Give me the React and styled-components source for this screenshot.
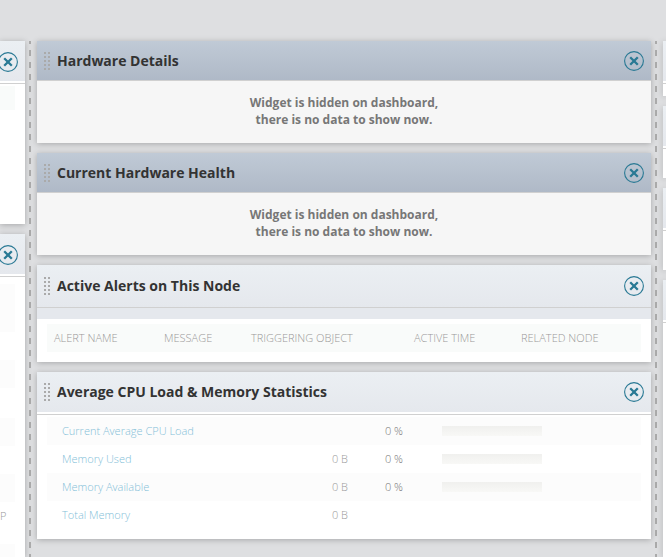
import React from "react";
import styled, { createGlobalStyle } from "styled-components";

const GlobalStyle = createGlobalStyle`
  * {
    box-sizing: border-box;
  }

  body {
    margin: 0;
    background: #dedfe1;
    font-family: "Open Sans", "Liberation Sans", sans-serif;
    font-size: 11px;
    color: #333;
  }
`;

const Dashboard = styled.main`
  display: grid;
  grid-template-columns: 25px 12px minmax(0, 1fr) 12px 3px;
  min-height: 100vh;
  padding-top: 41px;
`;

const Column = styled.div`
  display: flex;
  flex-direction: column;
  gap: 10px;
  min-width: 0;
`;

const Divider = styled.div`
  width: 2px;
  margin-left: 4px;
  background: repeating-linear-gradient(
    #aaa 0 3px,
    transparent 3px 9px,
    #aaa 9px 12px
  );
`;

const Panel = styled.section`
  display: flex;
  flex-direction: column;
  flex: ${({ $grow }) => ($grow ? "1" : "none")};
  height: ${({ $height }) => ($height ? `${$height}px` : "auto")};
  background: ${({ $muted }) => ($muted ? "#f6f6f6" : "#fff")};
  box-shadow: 0 1px 6px rgba(0, 0, 0, 0.25);
`;

const PanelHeader = styled.header`
  display: flex;
  align-items: center;
  flex: none;
  height: ${({ $height }) => $height || 40}px;
  padding: 0 7px;
  background: ${({ $muted }) =>
    $muted
      ? "linear-gradient(#c0cad6, #afb9c7)"
      : "linear-gradient(#ebeff3, #e5e8ed)"};
  border-bottom: ${({ $muted }) => ($muted ? "1px solid #d0d0d0" : "none")};
`;

const Title = styled.h2`
  flex: 1;
  margin: 0 0 0 7px;
  font-size: 14px;
  line-height: 20px;
  font-weight: 700;
  color: #333;
  white-space: nowrap;
`;

const CloseButton = styled.button`
  display: flex;
  flex: none;
  width: 20px;
  height: 20px;
  margin-left: auto;
  padding: 0;
  border: 0;
  background: none;
  cursor: pointer;
`;

const GripIcon = styled.svg`
  flex: none;
  fill: #aaa;
`;

const Rule = styled.div`
  flex: none;
  height: 1px;
  margin-top: ${({ $gap }) => $gap || 0}px;
  background: #d0d0d0;
`;

const Band = styled.div`
  height: 11px;
  background: #e5e8ed;
`;

const HiddenMessage = styled.p`
  margin: 0;
  padding: 13px 0 15px;
  font-size: 12px;
  line-height: 17px;
  font-weight: 700;
  color: #777;
  text-align: center;
`;

const Body = styled.div`
  padding: ${({ $top }) => $top}px 10px 10px;
`;

const Table = styled.table`
  width: 100%;
  border-collapse: collapse;
  table-layout: fixed;
  font-size: 11px;
  line-height: 16px;
`;

const HeadCell = styled.th`
  width: ${({ $width }) => ($width ? `${$width}px` : "auto")};
  height: 28px;
  padding: 0 7px;
  background: #f9fbfa;
  color: #999;
  font-weight: 300;
  text-align: left;
  white-space: nowrap;
`;

const StatRow = styled.tr`
  &:nth-child(odd) {
    background: #fcfcfc;
  }
`;

const StatCell = styled.td`
  width: ${({ $width }) => ($width ? `${$width}px` : "auto")};
  height: 28px;
  padding: 0;
  color: ${({ $dark }) => ($dark ? "#777" : "#999")};
  font-weight: 300;
  text-align: right;
`;

const StatName = styled.th`
  width: 220px;
  height: 28px;
  padding: 0 0 0 15px;
  font-weight: 300;
  text-align: left;
`;

const StatLink = styled.a`
  color: #84c0d8;
  text-decoration: none;
`;

const Bar = styled.div`
  width: 100px;
  height: 10px;
  margin-left: 39px;
  background: linear-gradient(#f0f0ee, #f8f8f6);
`;

const Stripe = styled.div`
  flex: ${({ $grow }) => ($grow ? "1" : "none")};
  height: ${({ $height }) => $height}px;
  margin: ${({ $top }) => $top}px 10px 0 0;
  background: ${({ $head }) => ($head ? "#f9fbfa" : "#fcfcfc")};
`;

const ClippedCell = styled.div`
  height: 28px;
  padding-right: 20px;
  line-height: 28px;
  color: #999;
  font-weight: 300;
  text-align: right;
`;

const SidePanelHeader = styled(PanelHeader)`
  overflow: hidden;
  padding: 2px 7px 0 0;
  justify-content: flex-end;
`;

const Grip = () => (
  <GripIcon width="6" height="18" viewBox="0 0 6 18" aria-hidden="true">
    {[0, 4, 8, 12, 16].map((y) => (
      <React.Fragment key={y}>
        <rect x="0" y={y} width="2" height="2" />
        <rect x="4" y={y} width="2" height="2" />
      </React.Fragment>
    ))}
  </GripIcon>
);

const Close = ({ label }) => (
  <CloseButton type="button" aria-label={label}>
    <svg width="20" height="20" viewBox="0 0 20 20" fill="none" stroke="#297994">
      <circle cx="10" cy="10" r="9.4" strokeWidth="1.1" />
      <path d="M6.2 6.2l7.6 7.6M13.8 6.2l-7.6 7.6" strokeWidth="2.3" />
    </svg>
  </CloseButton>
);

const WidgetHeader = ({ title, height, muted }) => (
  <PanelHeader $height={height} $muted={muted}>
    <Grip />
    <Title>{title}</Title>
    <Close label={`Remove ${title}`} />
  </PanelHeader>
);

const HiddenWidget = ({ title }) => (
  <Panel $muted>
    <WidgetHeader title={title} muted />
    <HiddenMessage>
      Widget is hidden on dashboard,
      <br />
      there is no data to show now.
    </HiddenMessage>
  </Panel>
);

const alertColumns = [
  { name: "ALERT NAME", width: 110 },
  { name: "MESSAGE", width: 87 },
  { name: "TRIGGERING OBJECT", width: 163 },
  { name: "ACTIVE TIME", width: 107 },
  { name: "RELATED NODE" },
];

const stats = [
  { name: "Current Average CPU Load", percent: "0 %" },
  { name: "Memory Used", value: "0 B", percent: "0 %" },
  { name: "Memory Available", value: "0 B", percent: "0 %" },
  { name: "Total Memory", value: "0 B" },
];

const AlertsWidget = () => (
  <Panel>
    <WidgetHeader title="Active Alerts on This Node" height={42} />
    <Rule />
    <Band />
    <Body $top={5}>
      <Table>
        <thead>
          <tr>
            {alertColumns.map(({ name, width }) => (
              <HeadCell key={name} $width={width} scope="col">
                {name}
              </HeadCell>
            ))}
          </tr>
        </thead>
      </Table>
    </Body>
  </Panel>
);

const StatsWidget = () => (
  <Panel>
    <WidgetHeader title="Average CPU Load & Memory Statistics" />
    <Rule $gap={2} />
    <Body $top={2}>
      <Table>
        <tbody>
          {stats.map(({ name, value, percent }) => (
            <StatRow key={name}>
              <StatName scope="row">
                <StatLink href="#">{name}</StatLink>
              </StatName>
              <StatCell $width={81}>{value}</StatCell>
              <StatCell $width={55} $dark>
                {percent}
              </StatCell>
              <StatCell>{percent && <Bar />}</StatCell>
            </StatRow>
          ))}
        </tbody>
      </Table>
    </Body>
  </Panel>
);

const App = () => {
  return (
    <>
      <GlobalStyle />
      <Dashboard>
        <Column>
          <Panel $height={183}>
            <SidePanelHeader>
              <Close label="Remove widget" />
            </SidePanelHeader>
            <Rule $gap={2} />
            <Stripe $top={2} $height={24} $head />
          </Panel>
          <Panel $grow>
            <SidePanelHeader>
              <Close label="Remove widget" />
            </SidePanelHeader>
            <Rule $gap={2} />
            <Stripe $top={7} $height={48} />
            <Stripe $top={28} $height={28} />
            <Stripe $top={30} $height={28} />
            <Stripe $top={28} $height={28} />
            <ClippedCell>P</ClippedCell>
            <Stripe $top={14} $grow />
          </Panel>
        </Column>
        <Divider />
        <Column>
          <HiddenWidget title="Hardware Details" />
          <HiddenWidget title="Current Hardware Health" />
          <AlertsWidget />
          <StatsWidget />
        </Column>
        <Divider />
        <Column>
          <Panel $height={55}>
            <PanelHeader />
            <Rule $gap={2} />
          </Panel>
          <Panel $height={72}>
            <PanelHeader />
            <Rule $gap={2} />
          </Panel>
          <Panel $height={82}>
            <PanelHeader />
            <Rule $gap={2} />
          </Panel>
          <Panel $grow>
            <PanelHeader />
            <Rule $gap={2} />
          </Panel>
        </Column>
      </Dashboard>
    </>
  );
};

export default App;
